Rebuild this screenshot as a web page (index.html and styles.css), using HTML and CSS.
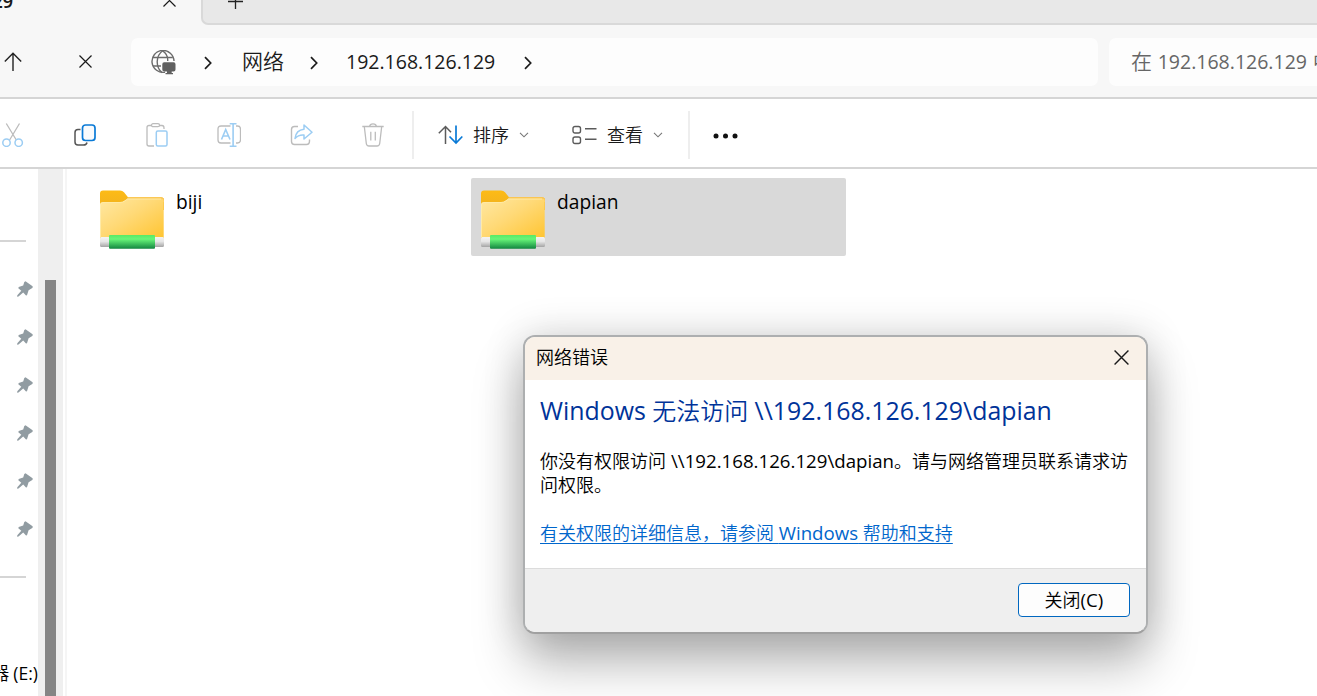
FILE: index.html
```html
<!DOCTYPE html>
<html lang="zh-CN">
<head>
<meta charset="utf-8">
<title>192.168.126.129</title>
<link rel="stylesheet" href="styles.css">
</head>
<body>
<svg class="defs" width="0" height="0" aria-hidden="true">
  <defs>
    <linearGradient id="front" x1="0" y1="0" x2="1" y2="1"><stop offset="0" stop-color="#ffe8a3"/><stop offset=".45" stop-color="#ffd976"/><stop offset="1" stop-color="#ffc430"/></linearGradient>
    <linearGradient id="back" x1="0" y1="0" x2="0" y2="1"><stop offset="0" stop-color="#fdbb16"/><stop offset="1" stop-color="#efb020"/></linearGradient>
    <linearGradient id="pipe" x1="0" y1="0" x2="0" y2="1"><stop offset="0" stop-color="#f4f4f4"/><stop offset=".45" stop-color="#e6e6e6"/><stop offset="1" stop-color="#a4a4a4"/></linearGradient>
    <linearGradient id="green" x1="0" y1="0" x2="0" y2="1"><stop offset="0" stop-color="#58e966"/><stop offset=".3" stop-color="#68f579"/><stop offset=".6" stop-color="#43c661"/><stop offset="1" stop-color="#128640"/></linearGradient>
    <symbol id="folder" viewBox="0 0 64 60">
      <path d="M0 14V3.500Q0 .500 3 .500H20Q22.500 .500 24 2.200L28 7.300H61Q64 7.300 64 10V20H0Z" fill="url(#back)"/>
      <path d="M28 7.300H61Q64 7.300 64 10V12L26 10Z" fill="#fbc757"/>
      <path d="M0 49V14.500Q0 12.300 2.500 12.300H20Q22.500 12.300 24.500 10.800L27.500 8.700H61.500Q63.700 8.700 63.700 11V49Z" fill="url(#front)"/>
      <path d="M.500 47V15Q.500 12.500 3 12.500H20Q22.500 12.500 25 10.800L27.500 9H61" fill="none" stroke="#ffedb0" stroke-width=".8"/>
      <rect y="47" width="64" height="10" rx="1.500" fill="url(#pipe)"/>
      <rect x="9" y="45" width="46" height="13.700" rx="1" fill="url(#green)"/>
    </symbol>
    <symbol id="pin" viewBox="0 0 16 16">
      <path d="M8.500 .300 15.600 5.300Q16 6.300 15.300 6.900L11.600 9.300 10 14.200 9 14.500 6.200 11.500 1.500 15.500.100 15.700.300 14.200 4.300 9.700 1.300 7.200 1.700 6 6.200 4.600 7.300 1Z" fill="#919ca2"/>
    </symbol>
    <symbol id="chev" viewBox="0 0 8 14"><path d="M1 1.200 6.700 7 1 12.800" fill="none" stroke="#1c1c1c" stroke-width="1.700"/></symbol>
    <symbol id="down" viewBox="0 0 10 6"><path d="M1 .800 5 4.800 9 .800" fill="none" stroke="#777" stroke-width="1.100"/></symbol>
    <symbol id="cross" viewBox="0 0 16 16"><path d="M.600 .600 15.400 15.400M15.400 .600.600 15.400" fill="none" stroke="#1a1a1a" stroke-width="1.500"/></symbol>
  </defs>
</svg>

<main class="window">
  <header class="tabs">
    <div class="tab-active">
      <span class="tab-title">29</span>
      <svg class="tab-close"><use href="#cross"/></svg>
    </div>
    <div class="tab-rest"><svg class="plus" viewBox="0 0 16 16"><path d="M8 0V16M0 8H16" stroke="#222" stroke-width="1.400"/></svg></div>
  </header>

  <nav class="navbar">
    <svg class="up" viewBox="0 0 18 20"><path d="M9 19V1.500M.800 9.600 9 1.300 17.200 9.600" fill="none" stroke="#222" stroke-width="1.400"/></svg>
    <svg class="stop"><use href="#cross"/></svg>
    <div class="address">
      <svg class="globe" viewBox="0 0 25 25">
        <g fill="none" stroke="#6b6b6b" stroke-width="1.400">
          <path d="M14 22.200A11 11 0 1 1 23 11"/>
          <path d="M11 22.600C4.500 17 4.500 6 11.700 .800C15 3 17 7 16.700 11"/>
          <path d="M2 7.500H21.800M2 16H10"/>
        </g>
        <path d="M13.200 12.300H22.600Q24.500 12.300 24.500 14.200V19.500Q24.500 21.400 22.600 21.400H20.700V23H22V24.300H14.500V23H16V21.400H13.200Q11.300 21.400 11.300 19.500V14.200Q11.300 12.300 13.200 12.300Z" fill="#606060"/>
      </svg>
      <svg class="chev c1"><use href="#chev"/></svg>
      <span class="crumb">网络</span>
      <svg class="chev c2"><use href="#chev"/></svg>
      <span class="crumb host"><span class="latin">192.168.126.129</span></span>
      <svg class="chev c3"><use href="#chev"/></svg>
    </div>
    <div class="search">在 <span class="latin">192.168.126.129</span> 中</div>
  </nav>

  <section class="toolbar">
    <svg class="tool" viewBox="0 0 24 24" fill="none" stroke-width="1.300"><path d="M5.300 .500 15.300 17M18.500 .500 8.600 17" stroke="#bcbcbc"/><g stroke="#9ccdf3" stroke-width="1.500"><circle cx="5.500" cy="19.700" r="3.700"/><circle cx="17.700" cy="19.700" r="3.700"/></g></svg>
    <svg class="tool" viewBox="0 0 24 24" fill="none" stroke-width="1.500"><path d="M7.500 6.500H5Q2 6.500 2 9.500V19Q2 22 5 22H10.500Q13.500 22 14 19.500" stroke="#555"/><rect x="9.500" y="2" width="12.500" height="15.500" rx="3" fill="#f9fbfd" stroke="#0a7ad6" stroke-width="1.700"/></svg>
    <svg class="tool" viewBox="0 0 24 24" fill="none" stroke-width="1.300"><path d="M6.500 2.500H4Q2 2.500 2 4.500V21Q2 23 4 23H9M14 2.500H17Q19 2.500 19 5V6" stroke="#bcbcbc"/><rect x="6.500" y=".700" width="8" height="3" rx="1.500" stroke="#bcbcbc"/><rect x="11.300" y="8" width="10.700" height="15" rx="1.500" stroke="#9ccdf3" stroke-width="1.500"/></svg>
    <svg class="tool" viewBox="0 0 24 24" fill="none" stroke-width="1.300"><path d="M13.500 3H4Q1 3 1 6V17Q1 20 4 20H13.500M19 3H20.500Q23.500 3 23.500 6V17Q23.500 20 20.500 20H19" stroke="#bcbcbc"/><path d="M4.500 16.500 8.700 6.500 13 16.500M6 13H11.500M12.700 .800H19.500M16.100 .800V23.300M12.700 23.300H19.500" stroke="#9ccdf3" stroke-width="1.600"/></svg>
    <svg class="tool" viewBox="0 0 24 24" fill="none" stroke-width="1.400"><path d="M9 3.500H5.500Q2.500 3.500 2.500 6.500V18.500Q2.500 21.500 5.500 21.500H17.500Q20.500 21.500 20.500 18V16.500" stroke="#bcbcbc"/><path d="M15 2 23 9.300 15 16V12Q9.500 11.500 6 15.500Q7 7 15 6.300Z" stroke="#9ccdf3" stroke-width="1.500" stroke-linejoin="round"/></svg>
    <svg class="tool" viewBox="0 0 24 24" fill="none" stroke="#bcbcbc" stroke-width="1.300"><path d="M1.300 3.500H22.700M3.300 3.500 5.300 20.500Q5.600 23 8 23H16Q18.400 23 18.700 20.500L20.700 3.500M8.500 3.500Q9 .800 12 .800T15.500 3.500M9.800 8.700V17.500M14.300 8.700V17.500"/></svg>
    <div class="group sort">
      <svg class="wide" viewBox="0 0 25 20" fill="none" stroke-width="1.500"><path d="M7.500 19V1.500M.800 8.200 7.500 1.500 13 7.300" stroke="#5b5b5b"/><path d="M18 .500V18M11.500 11.500 18 18 24.300 11.500" stroke="#0a7ad6" stroke-width="1.700"/></svg>
      <span>排序</span>
      <svg class="down"><use href="#down"/></svg>
    </div>
    <div class="group view">
      <svg class="wide" viewBox="0 0 25 20" fill="none" stroke="#5b5b5b" stroke-width="1.400"><rect x="1" y="1.500" width="7.500" height="6.500" rx="2"/><rect x="1" y="12" width="7.500" height="6.500" rx="2"/><path d="M13 3.700H24.500M13 14.300H24.500"/></svg>
      <span>查看</span>
      <svg class="down"><use href="#down"/></svg>
    </div>
    <div class="group more"><svg class="dots" viewBox="0 0 25 6" fill="#111"><circle cx="3" cy="3" r="2.500"/><circle cx="12.500" cy="3" r="2.500"/><circle cx="22" cy="3" r="2.500"/></svg></div>
  </section>

  <section class="content">
    <aside class="side">
      <hr>
      <div class="pins">
        <svg><use href="#pin"/></svg><svg><use href="#pin"/></svg><svg><use href="#pin"/></svg><svg><use href="#pin"/></svg><svg><use href="#pin"/></svg><svg><use href="#pin"/></svg>
      </div>
      <hr>
      <div class="drive"><span>器</span><span class="latin">(E:)</span></div>
    </aside>
    <div class="track"><div class="thumb"></div></div>
    <div class="files">
      <div class="item"><svg class="folder"><use href="#folder"/></svg><span class="name">biji</span></div>
      <div class="item selected"><svg class="folder"><use href="#folder"/></svg><span class="name">dapian</span></div>
    </div>
  </section>
</main>

<div class="dialog" role="dialog">
  <div class="title"><span>网络错误</span><svg class="close"><use href="#cross"/></svg></div>
  <div class="message">
    <h1><span class="latin">Windows</span> 无法访问 <span class="latin">\\192.168.126.129\dapian</span></h1>
    <p>你没有权限访问 <span class="latin">\\192.168.126.129\dapian</span>。请与网络管理员联系请求访<br>问权限。</p>
    <a>有关权限的详细信息，请参阅 <span class="latin">Windows</span> 帮助和支持</a>
  </div>
  <div class="actions"><button>关闭<span class="latin">(C)</span></button></div>
</div>
</body>
</html>
```
FILE: styles.css
```css
* { box-sizing: border-box; }
body { margin: 0; width: 1317px; height: 696px; overflow: hidden; background: #fff; color: #1a1a1a; font-family: "Noto Sans CJK SC", sans-serif; font-weight: 350; }
svg { display: block; flex: none; }
.defs { position: absolute; }
.latin { font-family: "Open Sans", "Noto Sans", sans-serif; font-size: .93em; font-weight: 400; line-height: 0; }
.window { width: 1317px; height: 696px; display: flex; flex-direction: column; overflow: hidden; }

.tabs { height: 25px; display: flex; background: #f7f7f7; }
.tab-active { width: 201px; display: flex; justify-content: space-between; align-items: flex-start; padding-right: 25px; }
.tab-title { width: 13px; display: flex; justify-content: flex-end; font: 600 18px/24px "Noto Sans", sans-serif; margin-top: -11px; }
.tab-close { width: 13px; height: 13px; margin-top: -6px; }
.tab-rest { flex: 1; background: #e8e8e8; border-left: 2px solid #d9d9d9; border-bottom: 2px solid #d9d9d9; border-bottom-left-radius: 7px; padding-left: 25px; }
.plus { width: 15px; height: 15px; margin-top: -6px; }

.navbar { height: 74px; background: #f7f7f7; border-bottom: 2px solid #d5d5d5; display: flex; padding: 13px 0 11px; }
.up { width: 18px; height: 20px; margin: 14px 61px 0 4px; }
.stop { width: 13px; height: 13px; margin: 17px 39px 0 -4px; }
.address { width: 967px; height: 48px; background: #fdfdfd; border-radius: 7px; display: flex; align-items: center; padding-left: 20px; font-size: 21px; }
.globe { width: 25px; height: 25px; }
.chev { width: 8px; height: 14px; }
.c1 { margin: 2px 30px 0 28px; }
.crumb { line-height: 45px; height: 48px; }
.c2 { margin: 2px 28px 0 26px; }
.host { width: 150px; white-space: nowrap; }
.c3 { margin: 2px 0 0 28px; }
.search { flex: 1; margin-left: 11px; background: #fdfdfd; border-radius: 7px 0 0 7px; padding-left: 22px; font-size: 21px; line-height: 45px; color: #666; white-space: nowrap; overflow: hidden; word-spacing: 1px; }

.toolbar { height: 70px; border-bottom: 2px solid #d5d5d5; display: flex; align-items: center; gap: 48px; font-size: 18px; }
.tool { width: 24px; height: 24px; margin-top: 4px; }
.tool:first-child { margin-left: 1px; }
.group { display: flex; align-items: center; height: 48px; margin-top: 4px; }
.group span { margin-top: -3px; }
.sort { border-left: 2px solid #eee; margin-left: -21px; padding-left: 24px; }
.wide { width: 25px; height: 20px; margin-right: 10px; }
.down { width: 10px; height: 6px; margin-left: 10px; }
.view { margin-left: -5px; }
.more { border-left: 2px solid #eee; margin-left: -23px; padding-left: 23px; }
.dots { width: 25px; height: 6px; margin-top: 2px; }

.content { flex: 1; display: flex; min-height: 0; }
.side { width: 38px; overflow: hidden; }
.side hr { width: 26px; height: 2px; border: 0; background: #d5d5d5; margin: 71px 0 39px; }
.pins { display: grid; gap: 32px; padding-left: 17px; }
.pins svg { width: 16px; height: 16px; }
.pins + hr { margin: 39px 0 0; }
.drive { white-space: nowrap; width: 38px; font-size: 18px; line-height: 26px; margin-top: 81px; color: #000; display: flex; align-items: baseline; justify-content: flex-end; gap: 4px; }
.drive .latin { font-size: 17.500px; }
.track { width: 25px; background: #efefef; padding: 111px 7px 0; }
.thumb { width: 11px; height: 420px; background: #858585; }
.files { flex: 1; margin-left: 2px; border-left: 2px solid #f5f5f5; padding: 9px 0 0 23px; display: flex; gap: 6px; }
.item { width: 375px; height: 78px; display: flex; padding: 12px 10px; color: #000; border-radius: 2px; }
.name { margin: -3px 0 0 12px; font: 400 19.2px/30px "Open Sans", "Noto Sans", sans-serif; }
.selected { background: #d9d9d9; }
.folder { width: 64px; height: 60px; }

.dialog { position: absolute; left: 523px; top: 335px; width: 625px; height: 299px; background: #fff; border: 2px solid #adafb0; border-bottom-color: #a0a0a0; border-radius: 12px; box-shadow: 0 30px 50px rgba(0,0,0,.28), 0 0 40px rgba(0,0,0,.16); overflow: hidden; display: flex; flex-direction: column; font-size: 18px; color: #000; }
.dialog .latin { font-size: 1.037em; }
.title { height: 43px; background: #f9f1e8; display: flex; justify-content: space-between; align-items: center; padding: 0 17px 2px 11px; }
.title span { margin-top: -3px; }
.close { width: 15px; height: 15px; }
.message { height: 188px; padding: 12px 15px 0; white-space: nowrap; }
.message h1 { margin: 0; font-size: 24px; line-height: 36px; font-weight: 350; color: #003399; word-spacing: 1px; }
.message p { margin: 20px 0 24px; line-height: 24px; word-spacing: 1px; }
.message a { color: #0066cc; text-decoration: underline; text-underline-offset: 3px; line-height: 24px; display: block; word-spacing: .7px; }
.actions { flex: 1; background: #efefef; border-top: 1px solid #dcdcdc; display: flex; justify-content: flex-end; padding: 14px 16px 0; }
.actions button { width: 112px; height: 34px; border: 1px solid #0067c0; border-radius: 4px; background: #fdfdfd; font: inherit; color: #000; padding: 0 0 2px; line-height: 28px; }
```
